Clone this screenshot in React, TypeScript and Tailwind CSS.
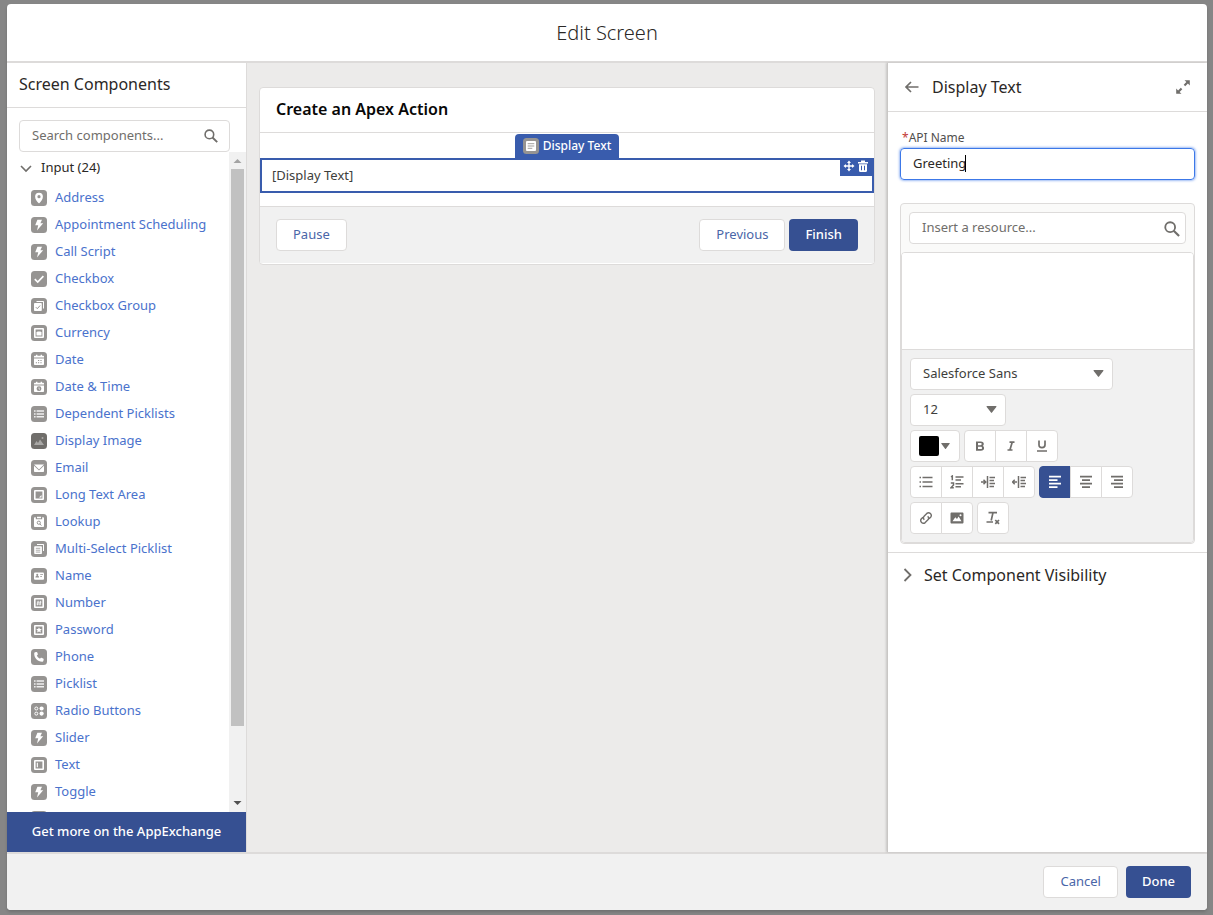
import React from "react";

const frame = <path fillRule="evenodd" d="M4 3h8a1 1 0 0 1 1 1v8a1 1 0 0 1-1 1H4a1 1 0 0 1-1-1V4a1 1 0 0 1 1-1zm.6 1.5v7h6.8v-7z" />;

const list = (
  <path d="M3 4.3h1.6v1.5H3zM5.6 4.3H13v1.5H5.6zM3 7.2h1.6v1.5H3zM5.6 7.2H13v1.5H5.6zM3 10.1h1.6v1.5H3zM5.6 10.1H13v1.5H5.6z" opacity=".85" />
);

const calendar = <path d="M5 2.8h1.4v1H9.6v-1H11v1h1.2c.5 0 .8.3.8.8v1H3v-1c0-.5.3-.8.8-.8H5zM3 6.4h10v5.8c0 .5-.3.8-.8.8H3.8c-.5 0-.8-.3-.8-.8z" />;

const glyphs: Record<string, React.ReactNode> = {
  pin: <path fillRule="evenodd" d="M8 2.8a3.9 3.9 0 0 0-3.9 3.9c0 2.7 2.3 5 3.4 6.3.3.3.7.3 1 0 1.1-1.3 3.4-3.6 3.4-6.3A3.9 3.9 0 0 0 8 2.8zm0 2.3a1.6 1.6 0 1 1 0 3.2 1.6 1.6 0 0 1 0-3.2z" />,
  bolt: <path d="M6.4 2.8h4.6L9.4 6.2h2.8L6 13.400l1.200-5.100H4.200z" />,
  check: <path d="M3.800 8.200 6.700 11l5.700-5.800" fill="none" stroke="#fff" strokeWidth="1.700" />,
  checks: (
    <>
      <path d="M5.500 3h6.700c.5 0 .8.3.8.8v6.700h-1V4H5.500z" />
      <path d="M3.800 5H10c.5 0 .8.3.8.8v6.400c0 .5-.3.8-.8.8H3.800c-.5 0-.8-.3-.8-.8V5.800c0-.5.3-.8.8-.8z" />
      <path d="m4.900 9.200 1.400 1.500 2.800-3.200" fill="none" stroke="#969492" />
    </>
  ),
  currency: <>{frame}<path d="M5.500 10.400V7.600l1-1.200h3l1 1.200v2.800z" /></>,
  date: <>{calendar}<path d="M7 8h1.200v1H7zM9.400 8h1.200v1H9.400zM4.800 10.300H6v1H4.800zM7 10.300h1.200v1H7zM9.400 10.300h1.200v1H9.400z" fill="#969492" /></>,
  datetime: <>{calendar}<circle cx="8" cy="9.700" r="2.400" fill="#969492" /><path d="M8 8.500v1.400l1 .5" stroke="#fff" strokeWidth=".7" fill="none" /></>,
  list,
  image: <path d="m3 12 2.500-4 1.500 2 2-3.500L13 12z" opacity=".4" />,
  email: <><path d="M3 4.600h10L8 9.400z" /><path d="m3 5.800 5 4.800 5-4.800v5.400c0 .4-.3.800-.8.800H3.800c-.5 0-.8-.4-.8-.8z" /></>,
  area: <>{frame}<path d="M8 10.600 10.500 8v2.600z" /></>,
  lookup: (
    <>
      <path d="M3 4c0-.5.300-.8.800-.8h1v2h6.400v-2h1c.5 0 .8.300.8.800v8.200c0 .5-.3.800-.8.800H3.800c-.5 0-.8-.3-.8-.8zM6 2.800h4v1.500H6z" />
      <circle cx="7.800" cy="8.700" r="1.600" fill="none" stroke="#969492" />
      <path d="m9 10 1.400 1.600" stroke="#969492" />
    </>
  ),
  multi: (
    <>
      <path d="M6 3h6.200c.5 0 .8.300.8.800V10h-1V4H6z" />
      <path d="M4 5.200h6.200c.4 0 .7.300.7.700v6.400c0 .4-.3.700-.7.700H4c-.5 0-.8-.3-.8-.7V5.900c0-.4.300-.7.800-.7z" />
      <path d="M4.800 7.300h4.500M4.800 9.200h4.500M4.800 11.100h4.500" stroke="#969492" strokeWidth=".8" />
    </>
  ),
  name: (
    <>
      <rect x="3" y="4.500" width="10" height="7.200" rx="1" />
      <path d="M6.200 5.800a1 1 0 0 1 .5 1.900c1 .2 1.400.7 1.400 1.800H4.400c0-1 .4-1.600 1.400-1.800a1 1 0 0 1 .4-1.900zM9.200 6.300H12v.8H9.200zM9.200 8.200H11v.8H9.200z" fill="#969492" />
    </>
  ),
  number: <>{frame}<path d="m7.200 5.800-.8 4.500M9.700 5.800l-.8 4.500M5.900 7.200h4.500M5.600 9h4.500" stroke="#fff" strokeWidth=".8" /></>,
  password: <>{frame}<path d="m8 5.200.9 1.800 1.900.1-1.400 1.300.5 2L8 9.400l-1.900 1 .5-2-1.400-1.300 1.900-.1z" /></>,
  phone: <path d="M4 3.300 5.300 3c.5-.1.900.1 1 .5l.5 1.600c.1.400 0 .7-.3.900l-.7.500c.7 1.500 1.700 2.500 3.200 3.200l.6-.7c.3-.3.600-.4.900-.2l1.600.6c.4.200.6.500.6.900l-.3 1.500c-.1.600-.5 1-1.200 1C6.500 12.700 3.200 9 3.200 4.500c0-.6.200-1.100.8-1.200z" />,
  radio: (
    <>
      <circle cx="5.300" cy="5.500" r="1.500" fill="none" stroke="#fff" />
      <circle cx="10.600" cy="5.500" r="2.100" />
      <circle cx="5.300" cy="10.600" r="1.500" fill="none" stroke="#fff" />
      <circle cx="10.600" cy="10.600" r="2.100" />
    </>
  ),
  text: <>{frame}<path d="M5.800 5.800h1.100v4.400H5.800z" /></>,
  display: <><rect x="3" y="3" width="10" height="10" rx="1" /><path d="M4.700 5.700h6.600M4.700 8h6.600M4.700 10.300h4.600" stroke="#969492" strokeWidth=".9" /></>,
};

interface ScreenComponent {
  label: string;
  icon: string;
}

const components: ScreenComponent[] = [
  { label: "Address", icon: "pin" },
  { label: "Appointment Scheduling", icon: "bolt" },
  { label: "Call Script", icon: "bolt" },
  { label: "Checkbox", icon: "check" },
  { label: "Checkbox Group", icon: "checks" },
  { label: "Currency", icon: "currency" },
  { label: "Date", icon: "date" },
  { label: "Date & Time", icon: "datetime" },
  { label: "Dependent Picklists", icon: "list" },
  { label: "Display Image", icon: "image" },
  { label: "Email", icon: "email" },
  { label: "Long Text Area", icon: "area" },
  { label: "Lookup", icon: "lookup" },
  { label: "Multi-Select Picklist", icon: "multi" },
  { label: "Name", icon: "name" },
  { label: "Number", icon: "number" },
  { label: "Password", icon: "password" },
  { label: "Phone", icon: "phone" },
  { label: "Picklist", icon: "list" },
  { label: "Radio Buttons", icon: "radio" },
  { label: "Slider", icon: "bolt" },
  { label: "Text", icon: "text" },
  { label: "Toggle", icon: "bolt" },
];

function TypeIcon({ name }: { name: string }) {
  return (
    <svg viewBox="0 0 16 16" className="size-4 shrink-0" fill="#fff" aria-hidden="true">
      <rect width="16" height="16" rx="3.500" fill={name === "image" ? "#706e6b" : "#969492"} />
      {name === "image" && <circle cx="11.500" cy="5" r="1" opacity=".4" />}
      {glyphs[name]}
    </svg>
  );
}

function SearchIcon({ className }: { className: string }) {
  return (
    <svg viewBox="0 0 14 14" className={className} fill="none" stroke="#706e6b" strokeWidth="1.600" aria-hidden="true">
      <circle cx="5.400" cy="5.400" r="4.300" />
      <path d="m8.500 8.500 4.700 4.700" strokeWidth="1.900" />
    </svg>
  );
}

function Caret({ className }: { className: string }) {
  return (
    <svg viewBox="0 0 10 7" className={className} fill="#706e6b" aria-hidden="true">
      <path d="M.6 0h8.800c.5 0 .7.500.4.900L5.500 6.600c-.3.400-.7.400-1 0L.2.900C-.1.500.1 0 .6 0z" />
    </svg>
  );
}

const neutral = "h-8 rounded border border-[#dddbda] bg-white px-4 text-[13px] text-[#4a66a8]";
const brand = "h-8 rounded bg-[#365092] px-4 text-[13px] font-medium text-white";

function Sidebar() {
  return (
    <aside className="flex w-60 shrink-0 flex-col border-r border-[#dddbda] bg-white">
      <div className="flex h-[45px] shrink-0 items-center border-b border-[#dddbda] px-3">
        <h2 className="pb-0.5 text-base leading-5 text-[#2b2826]">Screen Components</h2>
      </div>
      <div className="relative mt-3 mr-4 ml-3 shrink-0">
        <input
          type="search"
          aria-label="Search components"
          placeholder="Search components..."
          className="block h-8 w-full rounded border border-[#dddbda] bg-white px-3 pb-0.5 text-[13px] outline-none placeholder:text-[#706e6b]"
        />
        <SearchIcon className="absolute top-[9px] right-3 size-[14px]" />
      </div>
      <div className="flex min-h-0 flex-1">
        <div className="min-w-0 flex-1 overflow-hidden">
          <button className="flex h-8 items-center gap-2 pl-3 text-[13px] text-[#2b2826]">
            <svg viewBox="0 0 14 14" className="size-[14px]" fill="none" stroke="#706e6b" strokeWidth="1.600" aria-hidden="true">
              <path d="m2 5 5 5 5-5" />
            </svg>
            Input (24)
          </button>
          <ul className="h-0">
            {components.map((item) => (
              <li key={item.label} className="flex h-[27px] items-center gap-2 pl-6">
                <TypeIcon name={item.icon} />
                <a href="#" className="pb-0.5 text-[13px] leading-5 whitespace-nowrap text-[#4a72cc]">
                  {item.label}
                </a>
              </li>
            ))}
            <li className="flex h-[27px] items-center pl-6">
              <TypeIcon name="text" />
            </li>
          </ul>
        </div>
        <div className="flex w-[17px] shrink-0 flex-col items-center bg-[#f1f1f1]" aria-hidden="true">
          <svg viewBox="0 0 17 17" className="size-[17px]" fill="#a3a3a3">
            <path d="M4.500 11 8.500 7l4 4z" />
          </svg>
          <div className="w-full flex-1 px-0.5">
            <div className="h-[89%] bg-[#c1c1c1]" />
          </div>
          <svg viewBox="0 0 17 17" className="size-[17px]" fill="#505050">
            <path d="m4.500 6 4 4 4-4z" />
          </svg>
        </div>
      </div>
      <button className="h-10 shrink-0 bg-[#365092] text-[13px] font-medium text-white">Get more on the AppExchange</button>
    </aside>
  );
}

function Canvas() {
  return (
    <main className="min-w-0 flex-1 bg-[#ecebea] px-3 py-6">
      <section className="rounded border border-[#dddbda] bg-white pb-px">
        <div className="flex h-[45px] items-center border-b border-[#dddbda] px-4">
          <h2 className="pb-0.5 text-base leading-5 font-semibold text-[#080707]">Create an Apex Action</h2>
        </div>
        <div className="flex flex-col items-center pt-px pb-[13px]">
          <div className="flex h-6 items-center gap-1 rounded-t bg-[#395cad] px-2 text-xs font-medium text-white">
            <TypeIcon name="display" />
            Display Text
          </div>
          <div className="flex h-[35px] w-full items-start justify-between border-2 border-[#395cad]">
            <p className="self-center px-[10px] pb-0.5 text-[13px] leading-5 text-[#3e3e3c]">[Display Text]</p>
            <div className="flex h-4 items-start gap-0.5 bg-[#395cad] px-[3px]">
              <button aria-label="Move">
                <svg viewBox="0 0 12 12" className="size-3" fill="#fff" aria-hidden="true">
                  <path d="M6 0.500l2 2.400H6.700v2.400h2.400V4l2.400 2-2.400 2V6.700H6.700v2.400H8L6 11.500 4 9.100h1.300V6.700H2.900V8L.5 6l2.400-2v1.300h2.400V2.900H4z" />
                </svg>
              </button>
              <button aria-label="Delete">
                <svg viewBox="0 0 12 12" className="size-3" fill="#fff" aria-hidden="true">
                  <path d="M4 .5h4V2h3v1.400H1V2h3z" />
                  <path fillRule="evenodd" d="M2 4.200h8v6.600c0 .7-.4 1.200-1.100 1.200H3.100C2.400 12 2 11.500 2 10.800zM4 5.700v4.600h1V5.700zm3 0v4.600h1V5.700z" />
                </svg>
              </button>
            </div>
          </div>
        </div>
        <div className="flex h-[57px] items-center gap-1 border-t border-[#dddbda] bg-[#f1f1f1] px-4">
          <button className={neutral}>Pause</button>
          <div className="flex-1" />
          <button className={neutral}>Previous</button>
          <button className={brand}>Finish</button>
        </div>
      </section>
    </main>
  );
}

interface Tool {
  label: string;
  active?: boolean;
  icon: React.ReactNode;
}

const rule = (d: string) => <path d={d} fill="none" stroke="currentColor" strokeWidth="1.700" />;

const textTools: Tool[] = [
  { label: "Bold", icon: <path fillRule="evenodd" d="M3 2.500h4.800c2 0 3 1 3 2.500 0 .9-.4 1.500-1.100 1.900.9.400 1.400 1.100 1.400 2.100 0 1.700-1.200 2.700-3.200 2.700H3zm2 1.600v2.100h2.400c.9 0 1.300-.4 1.300-1.100 0-.6-.4-1-1.300-1zm0 3.700v2.300h2.700c.9 0 1.300-.4 1.300-1.200 0-.7-.4-1.100-1.300-1.100z" /> },
  { label: "Italic", icon: rule("M5.500 3.200h5M3.500 11h5M8.200 3.200 5.900 11") },
  { label: "Underline", icon: rule("M4 1.500v4.300c0 1.900 1 2.900 3 2.900s3-1 3-2.900V1.500M2 12h10") },
];

const listTools: Tool[] = [
  { label: "Bulleted list", icon: rule("M.5 2.500h1.500M3.500 2.500H13.500M.5 7h1.500M3.500 7H13.500M.5 11.500h1.500M3.500 11.500H13.500") },
  { label: "Numbered list", icon: <path d="M1 1.800 2.300 1v4.300M.8 8h2.700v2L1 12.800h2.800M5.500 2H13.500M5.500 5h5.500M5.500 8.800H13.500M5.500 11.800h5.500" fill="none" stroke="currentColor" strokeWidth="1.500" /> },
  { label: "Indent", icon: <path d="M0 7h4.500M2.500 4.800 4.700 7 2.500 9.200M6.500 1v12M8.500 2.500H14M8.500 5.500H13M8.500 8.500H14M8.500 11.500H13" fill="none" stroke="currentColor" strokeWidth="1.500" /> },
  { label: "Outdent", icon: <path d="M.5 7H5M2.700 4.800.5 7l2.200 2.200M6.500 1v12M8.500 2.500H14M8.500 5.500H13M8.500 8.500H14M8.500 11.500H13" fill="none" stroke="currentColor" strokeWidth="1.500" /> },
];

const alignTools: Tool[] = [
  { label: "Left align", active: true, icon: rule("M1 1.700h12M1 5.200h8.500M1 8.700h12M1 12.200h8.500") },
  { label: "Center align", icon: rule("M1 1.700h12M3 5.200h8M1 8.700h12M3 12.200h8") },
  { label: "Right align", icon: rule("M1 1.700h12M4 5.200h9M1 8.700h12M4 12.200h9") },
];

const insertTools: Tool[] = [
  { label: "Link", icon: <path d="M5.300 8.700a2.700 2.700 0 0 1 0-3.800l2.500-2.500a2.700 2.700 0 0 1 3.800 3.800L10 7.800M8.700 5.300a2.700 2.700 0 0 1 0 3.800l-2.500 2.500a2.700 2.700 0 0 1-3.800-3.800L4 6.200" fill="none" stroke="currentColor" strokeWidth="1.400" /> },
  { label: "Image", icon: <path fillRule="evenodd" d="M1.500 1.500h11c.5 0 1 .5 1 1v9c0 .5-.5 1-1 1h-11c-.5 0-1-.5-1-1v-9c0-.5.5-1 1-1zM2.500 10.300h9L8.600 5.500 7 8 5.300 6.300zM10.500 3.200a1 1 0 1 0 0 2 1 1 0 0 0 0-2z" /> },
];

const clearTools: Tool[] = [
  { label: "Remove formatting", icon: <path d="M2.500 1.600h8.500M7 1.600 5.200 9.500M.5 11h6.500M9.300 9l3.700 3.800M13 9l-3.700 3.800" fill="none" stroke="currentColor" strokeWidth="1.700" /> },
];

function ToolGroup({ tools }: { tools: Tool[] }) {
  return (
    <div className="flex -space-x-px">
      {tools.map((tool) => (
        <button
          key={tool.label}
          aria-label={tool.label}
          className={
            tool.active
              ? "flex size-8 items-center justify-center border border-[#365092] bg-[#365092] text-white first:rounded-l last:rounded-r"
              : "flex size-8 items-center justify-center border border-[#dddbda] bg-white text-[#706e6b] first:rounded-l last:rounded-r"
          }
        >
          <svg viewBox="0 0 14 14" className="size-[14px]" fill="currentColor" aria-hidden="true">
            {tool.icon}
          </svg>
        </button>
      ))}
    </div>
  );
}

function Properties() {
  return (
    <aside className="z-10 w-80 shrink-0 border-l border-[#c9c7c5] bg-white shadow-[-1px_0_2px_rgba(0,0,0,0.16)]">
      <div className="flex h-[49px] items-center border-b border-[#dddbda] px-4">
        <button aria-label="Back">
          <svg viewBox="0 0 16 16" className="size-4" fill="none" stroke="#706e6b" strokeWidth="1.700" aria-hidden="true">
            <path d="M14.500 8H2.500M7 3 2 8l5 5" />
          </svg>
        </button>
        <h2 className="flex-1 pl-3 text-base leading-5 text-[#2b2826]">Display Text</h2>
        <button aria-label="Expand">
          <svg viewBox="0 0 16 16" className="size-4" fill="#706e6b" aria-hidden="true">
            <path d="M9.500 1.200h5.300v5.300l-1.900-1.900-2.700 2.700-1.500-1.500 2.700-2.700zM6.500 14.800H1.200V9.500l1.900 1.900 2.700-2.700 1.500 1.500-2.700 2.700z" />
          </svg>
        </button>
      </div>

      <div className="px-3 pt-4 pb-2">
        <label htmlFor="api-name" className="block pl-0.5 text-xs leading-5 text-[#514f4d]">
          <span className="text-[#c23934]">*</span>API Name
        </label>
        <div className="relative">
          <input
            id="api-name"
            defaultValue="Greeting"
            className="block h-8 w-full rounded border border-[#3c78e8] px-3 pb-0.5 text-[13px] text-[#2b2826] shadow-[0_0_3px_#3c78e8] outline-none"
          />
          <div className="absolute top-[7px] left-[65px] h-[17px] w-px bg-black" />
        </div>

        <div className="mt-[23px] rounded border border-[#dddbda] bg-[#fafaf9]">
          <div className="relative p-2">
            <input
              aria-label="Insert a resource"
              placeholder="Insert a resource..."
              className="block h-8 w-full rounded border border-[#dddbda] bg-white px-3 pb-0.5 text-[13px] outline-none placeholder:text-[#706e6b]"
            />
            <SearchIcon className="absolute top-[17px] right-[14px] size-4" />
          </div>
          <div className="overflow-hidden rounded border border-[#dddbda]">
            <textarea aria-label="Display text content" className="block h-24 w-full resize-none bg-white p-3 text-[13px] outline-none" />
            <div className="flex flex-col gap-1 border-t border-[#dddbda] bg-[#f1f1f1] p-2">
              <div className="relative w-[203px]">
                <select aria-label="Font" className="block h-8 w-full appearance-none rounded border border-[#dddbda] bg-white px-3 text-[13px] text-[#3e3e3c]">
                  <option>Salesforce Sans</option>
                </select>
                <Caret className="pointer-events-none absolute top-3 right-[9px] h-[7px] w-[11px]" />
              </div>
              <div className="relative w-24">
                <select aria-label="Font size" className="block h-8 w-full appearance-none rounded border border-[#dddbda] bg-white px-3 text-[13px] text-[#3e3e3c]">
                  <option>12</option>
                </select>
                <Caret className="pointer-events-none absolute top-3 right-[9px] h-[7px] w-[11px]" />
              </div>
              <div className="flex gap-1">
                <button aria-label="Text color" className="flex h-8 w-[50px] items-center rounded border border-[#dddbda] bg-white pl-2">
                  <span className="size-5 rounded-xs bg-black" />
                  <Caret className="ml-0.5 h-[6px] w-[9px]" />
                </button>
                <ToolGroup tools={textTools} />
              </div>
              <div className="flex gap-1">
                <ToolGroup tools={listTools} />
                <ToolGroup tools={alignTools} />
              </div>
              <div className="flex gap-1">
                <ToolGroup tools={insertTools} />
                <ToolGroup tools={clearTools} />
              </div>
            </div>
          </div>
        </div>
      </div>

      <button className="flex h-[45px] w-full items-center gap-2 border-t border-[#dddbda] px-3 text-base text-[#2b2826]">
        <svg viewBox="0 0 16 16" className="size-4" fill="none" stroke="#706e6b" strokeWidth="1.800" aria-hidden="true">
          <path d="m4.500 2 6 6-6 6" />
        </svg>
        Set Component Visibility
      </button>
    </aside>
  );
}

export default function App() {
  return (
    <div className="flex h-screen flex-col bg-[#868686] pt-1 pr-1.5 pb-[5px] pl-[7px] font-['Noto_Sans',sans-serif] text-[#2b2826]">
      <div role="dialog" aria-label="Edit Screen" className="flex min-h-0 flex-1 flex-col overflow-hidden rounded bg-white shadow-[0_2px_3px_rgba(0,0,0,0.16)]">
        <header className="flex h-[59px] shrink-0 items-center justify-center border-b-2 border-[#dddbda]">
          <h1 className="text-xl font-light text-[#2b2826]">Edit Screen</h1>
        </header>
        <div className="flex min-h-0 flex-1">
          <Sidebar />
          <Canvas />
          <Properties />
        </div>
        <footer className="flex h-[58px] shrink-0 items-center justify-end gap-2 border-t-2 border-[#dddbda] bg-[#f1f1f1] px-4">
          <button className={neutral}>Cancel</button>
          <button className={brand}>Done</button>
        </footer>
      </div>
    </div>
  );
}
